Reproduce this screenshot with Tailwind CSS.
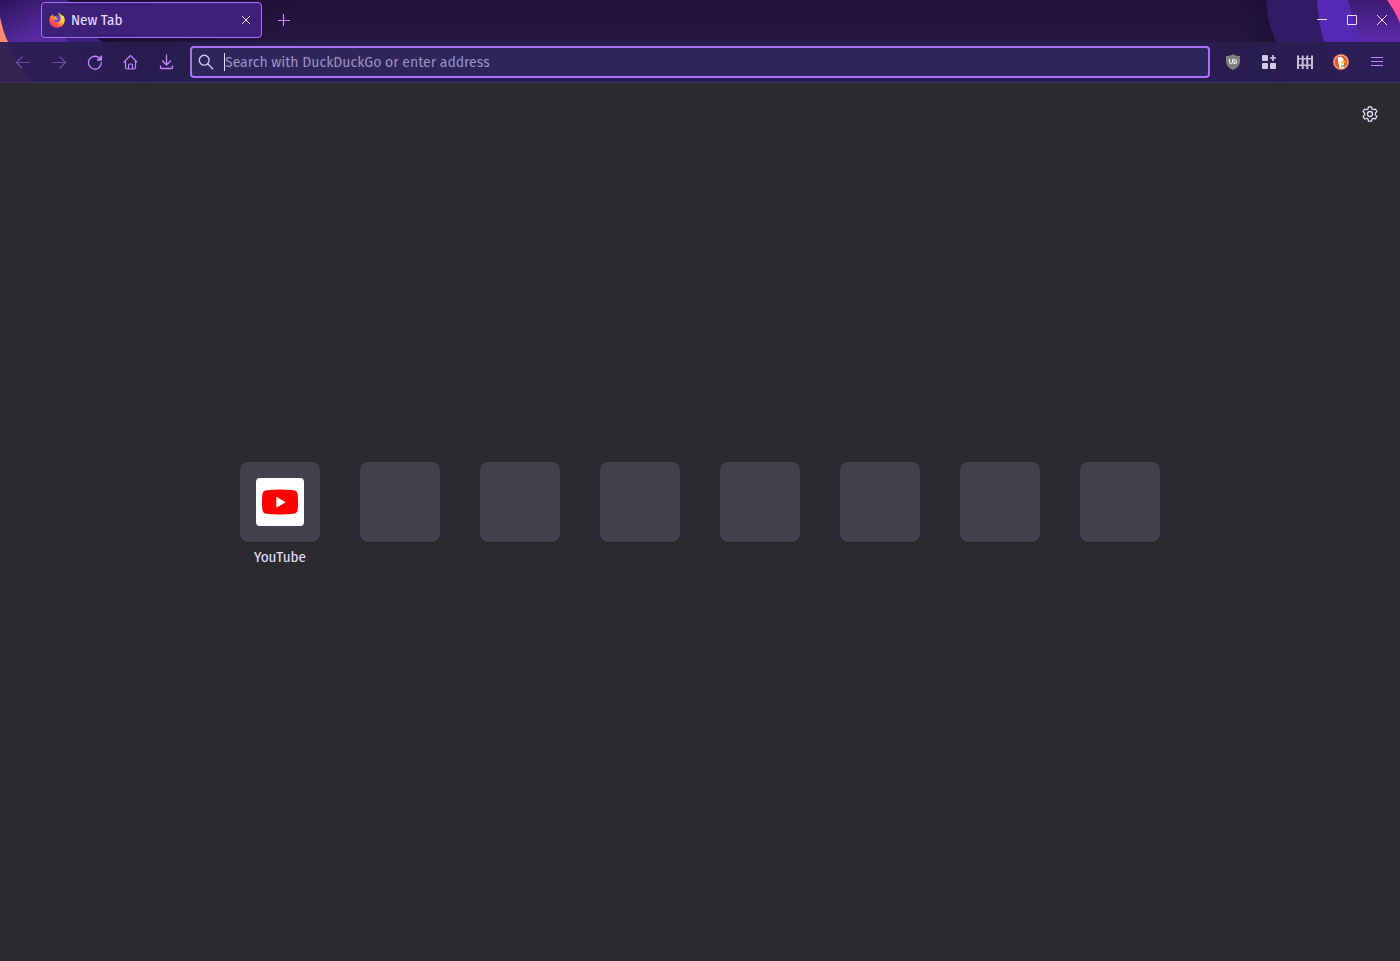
<!DOCTYPE html>
<html lang="en">
<head>
    <meta charset="UTF-8">
    <meta name="viewport" content="width=device-width, initial-scale=1.0">
    <title>New Tab</title>
    <script src="https://cdn.jsdelivr.net/npm/@tailwindcss/browser@4"></script>
</head>
<body class="flex flex-col min-h-screen bg-[#2b2a2f] text-[#e6e0ff] font-['Fira_Sans_Condensed','Fira_Sans','Noto_Sans',sans-serif] text-[15px] leading-5">
    <header class="relative isolate bg-linear-to-b from-[#22113a] to-[#281c4b]">
        <!-- theme artwork, left and right -->
        <svg class="absolute left-0 top-0 -z-10" width="300" height="83" viewBox="0 0 300 83" aria-hidden="true">
            <defs>
                <linearGradient id="l1" x1="0" y1="0" x2="0.6" y2="1">
                    <stop offset="0" stop-color="#2c145a"/><stop offset="0.5" stop-color="#5a2ba5"/><stop offset="1" stop-color="#5c2bb0"/>
                </linearGradient>
                <linearGradient id="l2" x1="0" y1="0" x2="1" y2="0">
                    <stop offset="0" stop-color="#190e35"/><stop offset="1" stop-color="#190e35" stop-opacity="0"/>
                </linearGradient>
            </defs>
            <path d="M60 0h240v83H110C90 58 72 30 60 0Z" fill="url(#l2)"/>
            <path d="M0 0h68c8 17 19 30 34 42l30 41H0Z" fill="#3f2280"/>
            <path d="M0 0h46c6 15 13 29 22 42l32 41H0Z" fill="url(#l1)"/>
            <path d="M0 17c2 9 4 17 8 25 6 15 14 29 24 41H0Z" fill="#ff8a70"/>
        </svg>
        <svg class="absolute right-0 top-0 -z-10" width="180" height="83" viewBox="0 0 180 83" aria-hidden="true">
            <defs>
                <linearGradient id="r1" x1="0" y1="0" x2="1" y2="0">
                    <stop offset="0" stop-color="#160e31" stop-opacity="0"/><stop offset="1" stop-color="#160e31"/>
                </linearGradient>
                <linearGradient id="r2" x1="0" y1="0" x2="0" y2="1">
                    <stop offset="0" stop-color="#3c1c70"/><stop offset="0.5" stop-color="#6029ac"/>
                </linearGradient>
            </defs>
            <path d="M20 0h54v83H20Z" fill="url(#r1)"/>
            <path d="M46 0c1 15 4 29 10 42 4 15 9 28 17 41h107V0Z" fill="#321b64"/>
            <path d="M97 0c1 15 3 29 7 42 4 15 10 28 18 41h58V0Z" fill="#542ab5"/>
            <path d="M128 0c3 15 8 29 15 42 8 15 17 28 27 41h10V0Z" fill="url(#r2)"/>
            <path d="M167 0c5 7 9 14 13 23V0Z" fill="#ff529b"/>
        </svg>

        <!-- tab strip -->
        <div class="flex items-center h-[42px] pb-0.5 pl-[41px] pr-[3px]">
            <div class="flex items-center w-[221px] h-9 pl-[7px] pr-[5px] rounded border border-[#ac70ff] bg-[#3d2078] shadow">
                <svg class="mr-[6px]" width="16" height="16" viewBox="0 0 16 16" aria-hidden="true">
                    <defs>
                        <linearGradient id="fx" x1="0.85" y1="0.1" x2="0.2" y2="0.95">
                            <stop offset="0" stop-color="#fff044"/><stop offset="0.4" stop-color="#ffc02a"/><stop offset="0.72" stop-color="#ff583c"/><stop offset="1" stop-color="#f02b80"/>
                        </linearGradient>
                    </defs>
                    <circle cx="8" cy="7.500" r="4" fill="#7741df"/>
                    <path d="M9.800.2c-.4 1.100-.2 2 .4 2.800 1.100 1.300 1.600 2.600 1.300 4.300-.4 2-1.800 3.100-3.600 3.100-1.700 0-3.100-1-3.300-2.600.8.5 1.800.4 2.500-.1.6-.4 1-.4 1.400-.5.3-.1.3-.5 0-.8-.4-.4-1.200-.6-1.800-.5.1-.8.5-1.300 1-1.600-.9-.2-1.900.1-2.600.7C4.300 4.300 4 3.200 4.300 2.300 3.300 2.800 2.600 3.600 2.200 4.400c-.1-.4-.1-.7 0-1.100C.9 4.500.2 6.400.2 8.300c0 4.200 3.500 7.500 7.800 7.500s7.800-3.400 7.800-7.700c0-1.900-.8-4-2.300-5.100.3.600.4 1.100.5 1.600C12.900 2.500 10.300 2.300 9.800.2Z" fill="url(#fx)"/>
                </svg>
                <span class="grow">New Tab</span>
                <button type="button" class="flex items-center justify-center size-5" aria-label="Close tab">
                    <svg width="10" height="10" viewBox="0 0 10 10" fill="none" stroke="currentColor"><path d="M1 1l8 8M9 1L1 9"/></svg>
                </button>
            </div>
            <button type="button" class="flex items-center justify-center size-8 ml-[6px] text-[#c688ff]" aria-label="New tab">
                <svg width="12" height="12" viewBox="0 0 12 12" stroke="currentColor" stroke-width="1.200"><path d="M0 6.500h12M5.500 0v12"/></svg>
            </button>
            <div class="flex ml-auto">
                <button type="button" class="flex items-center justify-center w-[30px] h-8" aria-label="Minimize">
                    <svg width="10" height="10" viewBox="0 0 10 10" stroke="currentColor"><path d="M0 4.500h10"/></svg>
                </button>
                <button type="button" class="flex items-center justify-center w-[30px] h-8" aria-label="Maximize">
                    <svg width="10" height="10" viewBox="0 0 10 10" fill="none" stroke="currentColor"><path d="M.5.5h9v9h-9z"/></svg>
                </button>
                <button type="button" class="flex items-center justify-center w-[30px] h-8" aria-label="Close window">
                    <svg width="10" height="10" viewBox="0 0 10 10" stroke="currentColor"><path d="M0 0l10 10M10 0L0 10"/></svg>
                </button>
            </div>
        </div>

        <!-- navigation toolbar -->
        <nav class="flex items-center h-[41px] px-[5px] bg-[#291d50]/95 border-b border-[#3e2f78] text-[#c688ff]">
            <button type="button" class="flex items-center justify-center w-9 h-8 opacity-45" aria-label="Back" disabled>
                <svg width="16" height="16" viewBox="0 0 16 16" fill="none" stroke="currentColor" stroke-width="1.200" stroke-linecap="round" stroke-linejoin="round"><path d="M14.500 8.500H1.500M7 3L1.500 8.500 7 14"/></svg>
            </button>
            <button type="button" class="flex items-center justify-center w-9 h-8 opacity-45" aria-label="Forward" disabled>
                <svg width="16" height="16" viewBox="0 0 16 16" fill="none" stroke="currentColor" stroke-width="1.200" stroke-linecap="round" stroke-linejoin="round"><path d="M1.500 8.500h13M9 3l5.500 5.500L9 14"/></svg>
            </button>
            <button type="button" class="flex items-center justify-center w-9 h-8" aria-label="Reload">
                <svg width="16" height="16" viewBox="0 0 16 16" fill="none" stroke="currentColor" stroke-width="1.300" stroke-linecap="round"><path d="M14.300 8.700A6.400 6.400 0 1 1 11.700 3.500"/><path d="M14.500 2.200v4h-4z" fill="currentColor" stroke-width="1" stroke-linejoin="round"/></svg>
            </button>
            <button type="button" class="flex items-center justify-center w-9 h-8" aria-label="Home">
                <svg width="16" height="16" viewBox="0 0 16 16" fill="none" stroke="currentColor" stroke-width="1.200" stroke-linecap="round" stroke-linejoin="round"><path d="M1 8.200L6.900 2q.6-.6 1.200 0L14 8.200M2.500 7v6.500q0 1.500 1.500 1.500h7q1.500 0 1.500-1.500V7M5.500 15v-4q0-1 1-1h2q1 0 1 1v4"/></svg>
            </button>
            <button type="button" class="flex items-center justify-center w-9 h-8" aria-label="Downloads">
                <svg width="16" height="16" viewBox="0 0 16 16" fill="none" stroke="currentColor" stroke-width="1.300" stroke-linecap="round" stroke-linejoin="round"><path d="M7.500 1v10M3.500 7l4 4 4-4M1.500 12v1.500q0 1 1 1h10q1 0 1-1V12"/></svg>
            </button>
            <div class="flex items-center grow h-8 mx-[5px] px-[6px] rounded border-2 border-[#ac70ff] bg-[#2e255b]">
                <svg class="mr-[10px] text-[#d3c9ef]" width="16" height="16" viewBox="0 0 16 16" fill="none" stroke="currentColor" stroke-width="1.400" stroke-linecap="round" aria-hidden="true"><circle cx="6.200" cy="6.200" r="4.900"/><path d="M10 10l4.700 4.700"/></svg>
                <input type="text" class="grow h-[18px] pt-0.5 border-l border-[#e6e0ff] bg-transparent outline-none font-['Fira_Sans','Noto_Sans',sans-serif] text-[14px] text-[#e6e0ff] placeholder:text-[#9d93c4]" placeholder="Search with DuckDuckGo or enter address" aria-label="Search with DuckDuckGo or enter address">
            </div>
            <button type="button" class="flex items-center justify-center w-9 h-8" aria-label="uBlock Origin">
                <svg width="16" height="16" viewBox="0 0 16 16" fill="none"><path d="M8 0c2 1.500 4 2 7 2v5c0 4.500-3 7-7 9-4-2-7-4.500-7-9V2c3 0 5-.5 7-2Z" fill="#808080"/><path d="M4.500 5v3q0 1.500 1.500 1.500T7.500 8V5M9 5.500v4h.8q1.700 0 1.700-2t-1.700-2H9" stroke="#eee" stroke-width="1.100"/></svg>
            </button>
            <button type="button" class="flex items-center justify-center w-9 h-8 text-[#d2cbe3]" aria-label="Extensions">
                <svg width="16" height="16" viewBox="0 0 16 16" fill="currentColor"><rect x="1" y="1" width="6" height="6" rx="1"/><rect x="1" y="9" width="6" height="6" rx="1"/><rect x="9" y="9" width="6" height="6" rx="1"/><path d="M11.200 1h1.600v2.200H15v1.600h-2.200V7h-1.600V4.800H9V3.200h2.200z"/></svg>
            </button>
            <button type="button" class="flex items-center justify-center w-9 h-8 text-[#c5bfd4]" aria-label="Containers">
                <svg width="16" height="16" viewBox="0 0 16 16" fill="currentColor"><path d="M0 2l1-1 1 1v13H0zM4.700 2l1-1 1 1v13h-2zM9.300 2l1-1 1 1v13h-2zM14 2l1-1 1 1v13h-2z"/><path d="M0 4h16v1.500H0zM0 10.500h16V12H0z"/></svg>
            </button>
            <button type="button" class="flex items-center justify-center w-9 h-8" aria-label="DuckDuckGo Privacy Essentials">
                <svg width="16" height="16" viewBox="0 0 16 16"><circle cx="8" cy="8" r="8" fill="#de5833"/><circle cx="8" cy="8" r="6.900" fill="none" stroke="#f7d9d0" stroke-width=".8"/><path d="M4.700 3.500c1.500-1.200 4.800-.9 5.600 1.400.4 1.500.2 2.500.4 4l.6 4.500c-1 .8-3.200 1-4.600.5C6.300 11.500 5 9 5 6.500z" fill="#fff"/><path d="M8.300 7.700c1.500-.9 4.700-1 4.700-.1s-2 1.900-4.300 1.900c-1 0-1-1.400-.4-1.800z" fill="#fdb913"/><path d="M8 11l1.500.7 2-1v2.700l-2-.7-1.500.7z" fill="#65bc46"/></svg>
            </button>
            <button type="button" class="flex items-center justify-center w-9 h-8" aria-label="Open application menu">
                <svg width="12" height="12" viewBox="0 0 12 12" stroke="currentColor"><path d="M0 1.500h12M0 5.500h12M0 9.500h12"/></svg>
            </button>
        </nav>
    </header>

    <main class="grid grow grid-rows-[1fr_auto_1fr]">
        <button type="button" class="flex items-center justify-center size-8 justify-self-end mt-[15px] mr-[14px]" aria-label="Personalize new tab">
            <svg width="16" height="16" viewBox="0 0 16 16" fill="none" stroke="currentColor" stroke-width="1.300" stroke-linejoin="round"><path d="M6.500.8h3l.5 2.100 1.300.8 2.100-.7 1.500 2.600-1.600 1.500v1.800l1.600 1.500-1.500 2.600-2.100-.7-1.300.8-.5 2.100h-3L6 13.100l-1.300-.8-2.100.7-1.500-2.600 1.600-1.500V7.100L1.100 5.600 2.600 3l2.100.7L6 2.900z"/><circle cx="8" cy="8" r="2.500"/></svg>
        </button>
        <ul class="flex justify-center gap-10 h-[120px]">
            <li>
                <a href="#" class="flex flex-col items-center w-20">
                    <span class="flex items-center justify-center size-20 rounded-lg bg-[#42414d] shadow">
                        <span class="flex items-center justify-center size-12 rounded bg-white">
                            <svg width="48" height="48" viewBox="0 0 48 48" aria-hidden="true"><path d="M10 12.200q14-1.500 28 0 3.200.5 3.700 4 .8 7.800 0 15.600-.5 3.500-3.700 4-14 1.500-28 0-3-.5-3.600-4-.9-7.800 0-15.600.6-3.500 3.600-4Z" fill="#f00"/><path d="M20.300 18.700v11l9.400-5.500z" fill="#fff"/></svg>
                        </span>
                    </span>
                    <span class="mt-[5px]">YouTube</span>
                </a>
            </li>
            <li class="size-20 rounded-lg bg-[#42414d] shadow"></li>
            <li class="size-20 rounded-lg bg-[#42414d] shadow"></li>
            <li class="size-20 rounded-lg bg-[#42414d] shadow"></li>
            <li class="size-20 rounded-lg bg-[#42414d] shadow"></li>
            <li class="size-20 rounded-lg bg-[#42414d] shadow"></li>
            <li class="size-20 rounded-lg bg-[#42414d] shadow"></li>
            <li class="size-20 rounded-lg bg-[#42414d] shadow"></li>
        </ul>
    </main>
</body>
</html>
